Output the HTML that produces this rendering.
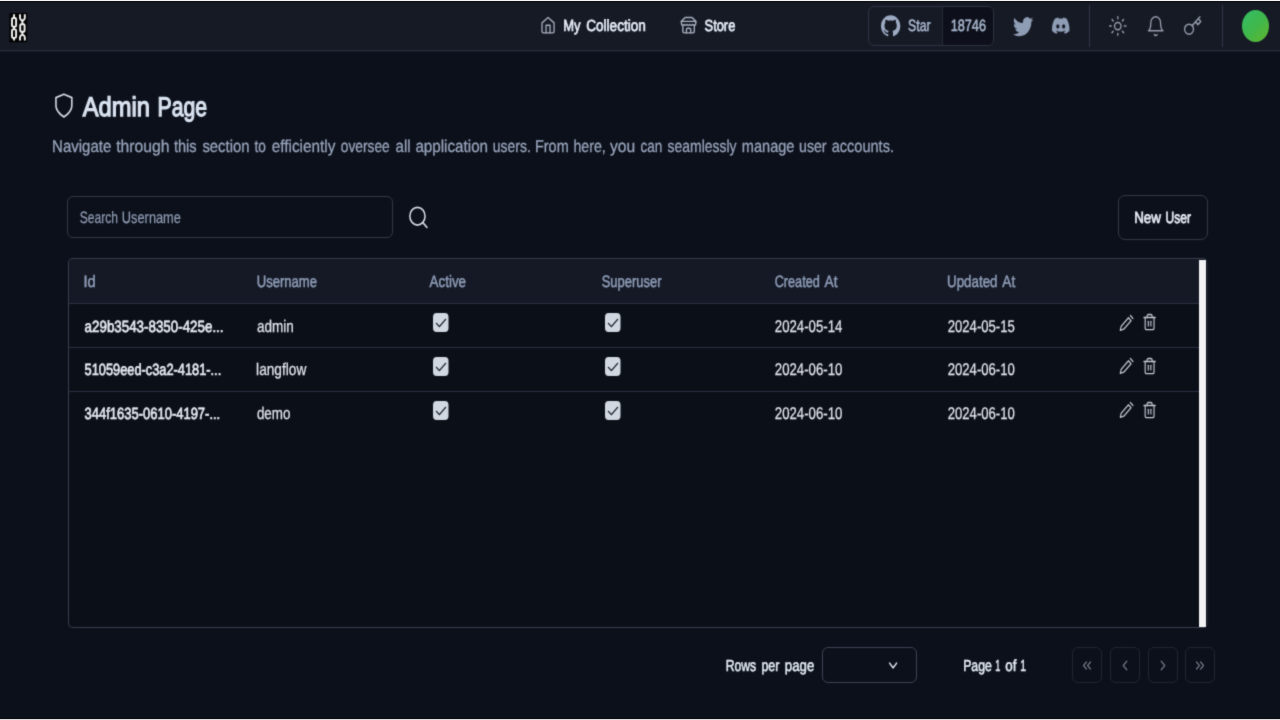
<!DOCTYPE html>
<html lang="en"><head><meta charset="utf-8"><title>Admin Page</title>
<style>
html,body{margin:0;padding:0;}
body{width:1280px;height:720px;overflow:hidden;position:relative;background:#0c101a;font-family:"Liberation Sans",sans-serif;}
.t{position:absolute;white-space:nowrap;line-height:1;transform-origin:0 0;display:block;}
.a{position:absolute;display:block;}
svg.a{overflow:visible;}
#txt text{font-family:"Liberation Sans",sans-serif;text-rendering:geometricPrecision;white-space:pre;}
.ln{fill:none;stroke-linecap:round;stroke-linejoin:round;}
</style></head><body>
<svg width="0" height="0" style="position:absolute"><filter id="soft" x="0" y="0" width="100%" height="100%" color-interpolation-filters="sRGB"><feConvolveMatrix order="3" kernelMatrix="0.0225 0.1050 0.0225 0.1050 0.4900 0.1050 0.0225 0.1050 0.0225" edgeMode="duplicate" preserveAlpha="true"/></filter></svg>
<div id="w" class="a" style="left:0;top:0;width:1280px;height:720px;background:#0c101a;filter:url(#soft)">
<!-- header -->
<div class="a" style="left:0;top:0;width:1280px;height:50px;background:#161a25"></div>
<div class="a" style="left:0;top:50px;width:1280px;height:1px;background:#272b39"></div>
<div class="a" style="left:0;top:51px;width:1280px;height:1px;background:#181c29"></div>

<!-- logo -->
<svg class="a" style="left:9px;top:13px" width="19" height="30" viewBox="0 0 19 30">
<rect x="0.4" y="0.1" width="17.8" height="29.1" rx="0.8" fill="#000"/>
<g fill="none" stroke="#f6f6f6" stroke-width="1.9" stroke-linecap="butt" stroke-linejoin="round">
<path d="M5.05 1.3V5"/><rect x="3" y="5" width="4.1" height="8.8" rx="1.3"/>
<path d="M5.05 13.8V16.4"/>
<rect x="3" y="16.4" width="4.1" height="8.5" rx="1.3"/><path d="M5.05 24.9V27.4"/>
<path d="M11 1.3V5Q11 6.6 13.4 7.8Q15.8 6.6 15.8 5V1.3"/>
<path d="M13.4 7.8V11.2"/>
<rect x="11.2" y="11.2" width="4.4" height="7.6" rx="1.3"/>
<path d="M13.4 18.8V21.6"/>
<path d="M11 27.4V24.2Q11 22.6 13.4 21.6Q15.8 22.6 15.8 24.2V27.4"/>
</g></svg>

<!-- home icon -->
<svg class="a ln" style="left:539.7px;top:16.4px" width="16.1" height="18.4" viewBox="0 0 24 24" preserveAspectRatio="none" stroke="#a9b0bf" stroke-width="1.9">
<path d="m3 9 9-7 9 7v11a2 2 0 0 1-2 2H5a2 2 0 0 1-2-2z"/><polyline points="9 22 9 12 15 12 15 22"/></svg>
<!-- store icon -->
<svg class="a ln" style="left:680.2px;top:16.4px" width="17.2" height="18.4" viewBox="0 0 24 24" preserveAspectRatio="none" stroke="#a9b0bf" stroke-width="1.9">
<path d="m2 7 4.41-4.41A2 2 0 0 1 7.83 2h8.34a2 2 0 0 1 1.42.59L22 7"/><path d="M4 12v8a2 2 0 0 0 2 2h12a2 2 0 0 0 2-2v-8"/><path d="M15 22v-4a2 2 0 0 0-2-2h-2a2 2 0 0 0-2 2v4"/><path d="M2 7h20"/><path d="M22 7v3a2 2 0 0 1-2 2a2.7 2.7 0 0 1-1.59-.63.7.7 0 0 0-.82 0A2.7 2.7 0 0 1 16 12a2.7 2.7 0 0 1-1.59-.63.7.7 0 0 0-.82 0A2.7 2.7 0 0 1 12 12a2.7 2.7 0 0 1-1.59-.63.7.7 0 0 0-.82 0A2.7 2.7 0 0 1 8 12a2.7 2.7 0 0 1-1.59-.63.7.7 0 0 0-.82 0A2.7 2.7 0 0 1 4 12a2 2 0 0 1-2-2V7"/></svg>

<!-- github button -->
<div class="a" style="left:868.3px;top:5.5px;width:125.6px;height:40.5px;box-sizing:border-box;border:1px solid #2c3243;border-radius:6px;background:#161a25;overflow:hidden">
<div class="a" style="left:72.4px;top:0;width:54px;height:40.5px;background:#0d101a;border-left:1px solid #252a39"></div></div>
<svg class="a" style="left:880.6px;top:14.6px" width="19.3" height="21.6" viewBox="0 0 24 24" preserveAspectRatio="none" fill="#9caac2">
<path d="M12 .297c-6.63 0-12 5.373-12 12 0 5.303 3.438 9.8 8.205 11.385.6.113.82-.258.82-.577 0-.285-.01-1.04-.015-2.04-3.338.724-4.042-1.61-4.042-1.61C4.422 18.07 3.633 17.7 3.633 17.7c-1.087-.744.084-.729.084-.729 1.205.084 1.838 1.236 1.838 1.236 1.07 1.835 2.809 1.305 3.495.998.108-.776.417-1.305.76-1.605-2.665-.3-5.466-1.332-5.466-5.93 0-1.31.465-2.38 1.235-3.22-.135-.303-.54-1.523.105-3.176 0 0 1.005-.322 3.3 1.23.96-.267 1.98-.399 3-.405 1.02.006 2.04.138 3 .405 2.28-1.552 3.285-1.23 3.285-1.23.645 1.653.24 2.873.12 3.176.765.84 1.23 1.91 1.23 3.22 0 4.61-2.805 5.625-5.475 5.92.42.36.81 1.096.81 2.22 0 1.606-.015 2.896-.015 3.286 0 .315.21.69.825.57C20.565 22.092 24 17.592 24 12.297c0-6.627-5.373-12-12-12"/></svg>
<!-- twitter -->
<svg class="a" style="left:1012.7px;top:14.6px" width="20.4" height="23.5" viewBox="0 0 24 24" preserveAspectRatio="none" fill="#8e9cb4">
<path d="M23.953 4.57a10 10 0 01-2.825.775 4.958 4.958 0 002.163-2.723c-.951.555-2.005.959-3.127 1.184a4.92 4.92 0 00-8.384 4.482C7.69 8.095 4.067 6.13 1.64 3.162a4.822 4.822 0 00-.666 2.475c0 1.71.87 3.213 2.188 4.096a4.904 4.904 0 01-2.228-.616v.06a4.923 4.923 0 003.946 4.827 4.996 4.996 0 01-2.212.085 4.936 4.936 0 004.604 3.417 9.867 9.867 0 01-6.102 2.105c-.39 0-.779-.023-1.17-.067a13.995 13.995 0 007.557 2.209c9.053 0 13.998-7.496 13.998-13.985 0-.21 0-.42-.015-.63A9.935 9.935 0 0024 4.59z"/></svg>
<!-- discord -->
<svg class="a" style="left:1051.9px;top:15.1px" width="17.5" height="21.2" viewBox="0 0 24 24" preserveAspectRatio="none" fill="#8e9cb4">
<path d="M20.317 4.3698a19.7913 19.7913 0 00-4.8851-1.5152.0741.0741 0 00-.0785.0371c-.211.3753-.4447.8648-.6083 1.2495-1.8447-.2762-3.68-.2762-5.4868 0-.1636-.3933-.4058-.8742-.6177-1.2495a.077.077 0 00-.0785-.037 19.7363 19.7363 0 00-4.8852 1.515.0699.0699 0 00-.0321.0277C.5334 9.0458-.319 13.5799.0992 18.0578a.0824.0824 0 00.0312.0561c2.0528 1.5076 4.0413 2.4228 5.9929 3.0294a.0777.0777 0 00.0842-.0276c.4616-.6304.8731-1.2952 1.226-1.9942a.076.076 0 00-.0416-.1057c-.6528-.2476-1.2743-.5495-1.8722-.8923a.077.077 0 01-.0076-.1277c.1258-.0943.2517-.1923.3718-.2914a.0743.0743 0 01.0776-.0105c3.9278 1.7933 8.18 1.7933 12.0614 0a.0739.0739 0 01.0785.0095c.1202.099.246.1981.3728.2924a.077.077 0 01-.0066.1276 12.2986 12.2986 0 01-1.873.8914.0766.0766 0 00-.0407.1067c.3604.698.7719 1.3628 1.225 1.9932a.076.076 0 00.0842.0286c1.961-.6067 3.9495-1.5219 6.0023-3.0294a.077.077 0 00.0313-.0552c.5004-5.177-.8382-9.6739-3.5485-13.6604a.061.061 0 00-.0312-.0286zM8.02 15.3312c-1.1825 0-2.1569-1.0857-2.1569-2.419 0-1.3332.9555-2.4189 2.157-2.4189 1.2108 0 2.1757 1.0952 2.1568 2.419 0 1.3332-.9555 2.4189-2.1569 2.4189zm7.9748 0c-1.1825 0-2.1569-1.0857-2.1569-2.419 0-1.3332.9554-2.4189 2.1569-2.4189 1.2108 0 2.1757 1.0952 2.1568 2.419 0 1.3332-.946 2.4189-2.1568 2.4189Z"/></svg>
<!-- separators -->
<div class="a" style="left:1089px;top:5px;width:1px;height:42px;background:#30354a"></div>
<div class="a" style="left:1222px;top:5px;width:1px;height:42px;background:#30354a"></div>
<!-- sun -->
<svg class="a ln" style="left:1108.1px;top:14.6px" width="19.6" height="22.2" viewBox="0 0 24 24" preserveAspectRatio="none" stroke="#989eae" stroke-width="1.6">
<circle cx="12" cy="12" r="4"/><path d="M12 2v2"/><path d="M12 20v2"/><path d="m4.93 4.93 1.41 1.41"/><path d="m17.66 17.66 1.41 1.41"/><path d="M2 12h2"/><path d="M20 12h2"/><path d="m6.34 17.66-1.41 1.41"/><path d="m19.07 4.93-1.41 1.41"/></svg>
<!-- bell -->
<svg class="a ln" style="left:1146.4px;top:15.0px" width="19.4" height="22.4" viewBox="0 0 24 24" preserveAspectRatio="none" stroke="#989eae" stroke-width="1.6">
<path d="M6 8a6 6 0 0 1 12 0c0 7 3 9 3 9H3s3-2 3-9"/><path d="M10.3 21a1.94 1.94 0 0 0 3.4 0"/></svg>
<!-- key -->
<svg class="a ln" style="left:1183.4px;top:15.1px" width="19.4" height="22" viewBox="0 0 24 24" preserveAspectRatio="none" stroke="#989eae" stroke-width="1.6">
<circle cx="7.5" cy="15.5" r="5.5"/><path d="m21 2-9.6 9.6"/><path d="m15.5 7.5 3 3L22 7l-3-3"/></svg>
<!-- avatar -->
<div class="a" style="left:1242px;top:9.5px;width:27px;height:32.4px;border-radius:50%;background:linear-gradient(135deg,#34bd68 0%,#3fb74c 50%,#62b62d 100%)"></div>

<!-- title -->
<svg class="a ln" style="left:51.7px;top:91.8px" width="23.8" height="27.2" viewBox="0 0 24 24" preserveAspectRatio="none" stroke="#d5dbe6" stroke-width="1.6">
<path d="M12 22s8-4 8-10V5l-8-3-8 3v7c0 6 8 10 8 10"/></svg>

<!-- search input -->
<div class="a" style="left:66.9px;top:195.5px;width:326px;height:42.8px;box-sizing:border-box;border:1px solid #343846;border-radius:6px"></div>
<svg class="a ln" style="left:407.3px;top:203.8px" width="22.8" height="26.6" viewBox="0 0 24 24" preserveAspectRatio="none" stroke="#d8dde7" stroke-width="1.6">
<circle cx="11" cy="11" r="8"/><path d="m21 21-4.3-4.3"/></svg>
<!-- new user -->
<div class="a" style="left:1118px;top:195px;width:90.4px;height:45px;box-sizing:border-box;border:1px solid #343846;border-radius:7px"></div>

<!-- table -->
<div class="a" style="left:67.6px;top:257.9px;width:1140.3px;height:370.5px;box-sizing:border-box;border:1px solid #373c4c;border-right-color:#1f2431;border-radius:5px;background:#0b0f18;overflow:hidden">
 <div class="a" style="left:0;top:0;width:1131px;height:44.6px;background:#151925"></div>
 <div class="a" style="left:0;top:44.1px;width:1131px;height:1px;background:#2a3041"></div>
 <div class="a" style="left:0;top:88.2px;width:1131px;height:1px;background:#2a3041"></div>
 <div class="a" style="left:0;top:132.3px;width:1131px;height:1px;background:#2a3041"></div>
</div>
<div class="a" style="left:1198.8px;top:259.6px;width:7.2px;height:367.2px;background:#f3f3f5"></div>
<svg class="a" style="left:433.0px;top:313.1px" width="15.5" height="19" viewBox="0 0 15.5 19"><rect x="0" y="0" width="15.5" height="19" rx="3.6" ry="4" fill="#d1d8e2"/><path d="M3.4 10.3 6.4 13.6 12.6 6.3" fill="none" stroke="#141923" stroke-width="1.25" stroke-linecap="round" stroke-linejoin="round"/></svg>
<svg class="a" style="left:605.4px;top:313.1px" width="15.5" height="19" viewBox="0 0 15.5 19"><rect x="0" y="0" width="15.5" height="19" rx="3.6" ry="4" fill="#d1d8e2"/><path d="M3.4 10.3 6.4 13.6 12.6 6.3" fill="none" stroke="#141923" stroke-width="1.25" stroke-linecap="round" stroke-linejoin="round"/></svg>
<svg class="a" style="left:433.0px;top:356.8px" width="15.5" height="19" viewBox="0 0 15.5 19"><rect x="0" y="0" width="15.5" height="19" rx="3.6" ry="4" fill="#d1d8e2"/><path d="M3.4 10.3 6.4 13.6 12.6 6.3" fill="none" stroke="#141923" stroke-width="1.25" stroke-linecap="round" stroke-linejoin="round"/></svg>
<svg class="a" style="left:605.4px;top:356.8px" width="15.5" height="19" viewBox="0 0 15.5 19"><rect x="0" y="0" width="15.5" height="19" rx="3.6" ry="4" fill="#d1d8e2"/><path d="M3.4 10.3 6.4 13.6 12.6 6.3" fill="none" stroke="#141923" stroke-width="1.25" stroke-linecap="round" stroke-linejoin="round"/></svg>
<svg class="a" style="left:433.0px;top:400.5px" width="15.5" height="19" viewBox="0 0 15.5 19"><rect x="0" y="0" width="15.5" height="19" rx="3.6" ry="4" fill="#d1d8e2"/><path d="M3.4 10.3 6.4 13.6 12.6 6.3" fill="none" stroke="#141923" stroke-width="1.25" stroke-linecap="round" stroke-linejoin="round"/></svg>
<svg class="a" style="left:605.4px;top:400.5px" width="15.5" height="19" viewBox="0 0 15.5 19"><rect x="0" y="0" width="15.5" height="19" rx="3.6" ry="4" fill="#d1d8e2"/><path d="M3.4 10.3 6.4 13.6 12.6 6.3" fill="none" stroke="#141923" stroke-width="1.25" stroke-linecap="round" stroke-linejoin="round"/></svg>
<svg class="a ln" style="left:1119.1px;top:313.7px" width="15.2" height="17.8" viewBox="0 0 24 24" preserveAspectRatio="none" stroke="#c4c9d4" stroke-width="1.8"><path d="M18 2l4 4"/><path d="M7.5 20.5 19 9l-4-4L3.500 16.500 2 22z"/></svg>
<svg class="a ln" style="left:1141.9px;top:313.2px" width="15.2" height="18.2" viewBox="0 0 24 24" preserveAspectRatio="none" stroke="#c4c9d4" stroke-width="1.8"><path d="M3 6h18"/><path d="M19 6v14c0 1-1 2-2 2H7c-1 0-2-1-2-2V6"/><path d="M8 6V4c0-1 1-2 2-2h4c1 0 2 1 2 2v2"/><path d="M10 11v6"/><path d="M14 11v6"/></svg>
<svg class="a ln" style="left:1119.1px;top:357.4px" width="15.2" height="17.8" viewBox="0 0 24 24" preserveAspectRatio="none" stroke="#c4c9d4" stroke-width="1.8"><path d="M18 2l4 4"/><path d="M7.5 20.5 19 9l-4-4L3.500 16.500 2 22z"/></svg>
<svg class="a ln" style="left:1141.9px;top:356.9px" width="15.2" height="18.2" viewBox="0 0 24 24" preserveAspectRatio="none" stroke="#c4c9d4" stroke-width="1.8"><path d="M3 6h18"/><path d="M19 6v14c0 1-1 2-2 2H7c-1 0-2-1-2-2V6"/><path d="M8 6V4c0-1 1-2 2-2h4c1 0 2 1 2 2v2"/><path d="M10 11v6"/><path d="M14 11v6"/></svg>
<svg class="a ln" style="left:1119.1px;top:401.0px" width="15.2" height="17.8" viewBox="0 0 24 24" preserveAspectRatio="none" stroke="#c4c9d4" stroke-width="1.8"><path d="M18 2l4 4"/><path d="M7.5 20.5 19 9l-4-4L3.500 16.500 2 22z"/></svg>
<svg class="a ln" style="left:1141.9px;top:400.5px" width="15.2" height="18.2" viewBox="0 0 24 24" preserveAspectRatio="none" stroke="#c4c9d4" stroke-width="1.8"><path d="M3 6h18"/><path d="M19 6v14c0 1-1 2-2 2H7c-1 0-2-1-2-2V6"/><path d="M8 6V4c0-1 1-2 2-2h4c1 0 2 1 2 2v2"/><path d="M10 11v6"/><path d="M14 11v6"/></svg>

<!-- pagination -->
<div class="a" style="left:822px;top:647px;width:95px;height:36px;box-sizing:border-box;border:1px solid #3b4254;border-radius:6px"></div>
<svg class="a ln" style="left:886px;top:655.5px" width="14.2" height="19" viewBox="0 0 24 24" preserveAspectRatio="none" stroke="#e2e7ef" stroke-width="2">
<path d="m6 9 6 6 6-6"/></svg>
<div class="a" style="left:1072.4px;top:647px;width:30px;height:36px;box-sizing:border-box;border:1px solid #20252f;border-radius:6px"></div>
<svg class="a ln" style="left:1080.4px;top:656.5px" width="14" height="17" viewBox="0 0 24 24" preserveAspectRatio="none" stroke="#757d8d" stroke-width="1.9"><path d="m11 17-5-5 5-5"/><path d="m18 17-5-5 5-5"/></svg>
<div class="a" style="left:1110.0px;top:647px;width:30px;height:36px;box-sizing:border-box;border:1px solid #20252f;border-radius:6px"></div>
<svg class="a ln" style="left:1118.0px;top:656.5px" width="14" height="17" viewBox="0 0 24 24" preserveAspectRatio="none" stroke="#757d8d" stroke-width="1.9"><path d="m15 18-6-6 6-6"/></svg>
<div class="a" style="left:1147.6px;top:647px;width:30px;height:36px;box-sizing:border-box;border:1px solid #20252f;border-radius:6px"></div>
<svg class="a ln" style="left:1155.6px;top:656.5px" width="14" height="17" viewBox="0 0 24 24" preserveAspectRatio="none" stroke="#757d8d" stroke-width="1.9"><path d="m9 18 6-6-6-6"/></svg>
<div class="a" style="left:1185.3px;top:647px;width:30px;height:36px;box-sizing:border-box;border:1px solid #20252f;border-radius:6px"></div>
<svg class="a ln" style="left:1193.3px;top:656.5px" width="14" height="17" viewBox="0 0 24 24" preserveAspectRatio="none" stroke="#757d8d" stroke-width="1.9"><path d="m6 17 5-5-5-5"/><path d="m13 17 5-5-5-5"/></svg>

<svg class="a" id="txt" style="left:0;top:0" width="1280" height="720" viewBox="0 0 1280 720">
<text transform="translate(563.23 0) scale(0.8052 1)" x="0" y="31" font-size="16.1" fill="#e6edf8" stroke="#e6edf8" stroke-width="0.7">My</text>
<text transform="translate(586.15 0) scale(0.8449 1)" x="0" y="31" font-size="16.1" fill="#e6edf8" stroke="#e6edf8" stroke-width="0.7">Collection</text>
<text transform="translate(704.58 0) scale(0.7982 1)" x="0" y="31" font-size="16.1" fill="#e6edf8" stroke="#e6edf8" stroke-width="0.7">Store</text>
<text transform="translate(908.12 0) scale(0.7435 1)" x="0" y="31" font-size="16.4" fill="#a6b4cb" stroke="#a6b4cb" stroke-width="0.6">Star</text>
<text transform="translate(950.66 0) scale(0.7745 1)" x="0" y="31" font-size="16.4" fill="#a6b4cb" stroke="#a6b4cb" stroke-width="0.6">18746</text>
<text transform="translate(82.80 0) scale(0.8767 1)" x="0" y="116" font-size="27.0" fill="#d9e2f0" stroke="#d9e2f0" stroke-width="1.25">Admin</text>
<text transform="translate(157.47 0) scale(0.7864 1)" x="0" y="116" font-size="27.0" fill="#d9e2f0" stroke="#d9e2f0" stroke-width="1.25">Page</text>
<text transform="translate(52.06 0) scale(0.8727 1)" x="0" y="152" font-size="17.2" fill="#97a4bc" stroke="#97a4bc" stroke-width="0.3">Navigate</text>
<text transform="translate(116.14 0) scale(0.9150 1)" x="0" y="152" font-size="17.2" fill="#97a4bc" stroke="#97a4bc" stroke-width="0.3">through</text>
<text transform="translate(173.88 0) scale(0.8506 1)" x="0" y="152" font-size="17.2" fill="#97a4bc" stroke="#97a4bc" stroke-width="0.3">this</text>
<text transform="translate(202.38 0) scale(0.8644 1)" x="0" y="152" font-size="17.2" fill="#97a4bc" stroke="#97a4bc" stroke-width="0.3">section</text>
<text transform="translate(254.52 0) scale(0.7957 1)" x="0" y="152" font-size="17.2" fill="#97a4bc" stroke="#97a4bc" stroke-width="0.3">to</text>
<text transform="translate(271.73 0) scale(0.8925 1)" x="0" y="152" font-size="17.2" fill="#97a4bc" stroke="#97a4bc" stroke-width="0.3">efficiently</text>
<text transform="translate(340.72 0) scale(0.8015 1)" x="0" y="152" font-size="17.2" fill="#97a4bc" stroke="#97a4bc" stroke-width="0.3">oversee</text>
<text transform="translate(395.53 0) scale(0.8754 1)" x="0" y="152" font-size="17.2" fill="#97a4bc" stroke="#97a4bc" stroke-width="0.3">all</text>
<text transform="translate(415.38 0) scale(0.8844 1)" x="0" y="152" font-size="17.2" fill="#97a4bc" stroke="#97a4bc" stroke-width="0.3">application</text>
<text transform="translate(492.81 0) scale(0.8107 1)" x="0" y="152" font-size="17.2" fill="#97a4bc" stroke="#97a4bc" stroke-width="0.3">users.</text>
<text transform="translate(534.99 0) scale(0.8393 1)" x="0" y="152" font-size="17.2" fill="#97a4bc" stroke="#97a4bc" stroke-width="0.3">From</text>
<text transform="translate(573.40 0) scale(0.8263 1)" x="0" y="152" font-size="17.2" fill="#97a4bc" stroke="#97a4bc" stroke-width="0.3">here,</text>
<text transform="translate(609.89 0) scale(0.9088 1)" x="0" y="152" font-size="17.2" fill="#97a4bc" stroke="#97a4bc" stroke-width="0.3">you</text>
<text transform="translate(640.42 0) scale(0.7868 1)" x="0" y="152" font-size="17.2" fill="#97a4bc" stroke="#97a4bc" stroke-width="0.3">can</text>
<text transform="translate(667.62 0) scale(0.8097 1)" x="0" y="152" font-size="17.2" fill="#97a4bc" stroke="#97a4bc" stroke-width="0.3">seamlessly</text>
<text transform="translate(741.78 0) scale(0.8479 1)" x="0" y="152" font-size="17.2" fill="#97a4bc" stroke="#97a4bc" stroke-width="0.3">manage</text>
<text transform="translate(799.00 0) scale(0.8240 1)" x="0" y="152" font-size="17.2" fill="#97a4bc" stroke="#97a4bc" stroke-width="0.3">user</text>
<text transform="translate(831.73 0) scale(0.8455 1)" x="0" y="152" font-size="17.2" fill="#97a4bc" stroke="#97a4bc" stroke-width="0.3">accounts.</text>
<text transform="translate(79.79 0) scale(0.7306 1)" x="0" y="223" font-size="16.5" fill="#8e9bb3" stroke="#8e9bb3" stroke-width="0.25">Search</text>
<text transform="translate(121.87 0) scale(0.7754 1)" x="0" y="223" font-size="16.5" fill="#8e9bb3" stroke="#8e9bb3" stroke-width="0.25">Username</text>
<text transform="translate(1134.16 0) scale(0.8320 1)" x="0" y="223" font-size="16.1" fill="#e8eef8" stroke="#e8eef8" stroke-width="0.7">New</text>
<text transform="translate(1165.46 0) scale(0.7488 1)" x="0" y="223" font-size="16.1" fill="#e8eef8" stroke="#e8eef8" stroke-width="0.7">User</text>
<text transform="translate(83.54 0) scale(0.8866 1)" x="0" y="287" font-size="16.5" fill="#8e9db8" stroke="#8e9db8" stroke-width="0.5">Id</text>
<text transform="translate(256.71 0) scale(0.7927 1)" x="0" y="287" font-size="16.5" fill="#8e9db8" stroke="#8e9db8" stroke-width="0.5">Username</text>
<text transform="translate(429.60 0) scale(0.8110 1)" x="0" y="287" font-size="16.5" fill="#8e9db8" stroke="#8e9db8" stroke-width="0.5">Active</text>
<text transform="translate(601.70 0) scale(0.7857 1)" x="0" y="287" font-size="16.5" fill="#8e9db8" stroke="#8e9db8" stroke-width="0.5">Superuser</text>
<text transform="translate(774.64 0) scale(0.7692 1)" x="0" y="287" font-size="16.5" fill="#8e9db8" stroke="#8e9db8" stroke-width="0.5">Created</text>
<text transform="translate(824.56 0) scale(0.8300 1)" x="0" y="287" font-size="16.5" fill="#8e9db8" stroke="#8e9db8" stroke-width="0.5">At</text>
<text transform="translate(947.04 0) scale(0.8087 1)" x="0" y="287" font-size="16.5" fill="#8e9db8" stroke="#8e9db8" stroke-width="0.5">Updated</text>
<text transform="translate(1002.36 0) scale(0.8300 1)" x="0" y="287" font-size="16.5" fill="#8e9db8" stroke="#8e9db8" stroke-width="0.5">At</text>
<text transform="translate(725.65 0) scale(0.7573 1)" x="0" y="671" font-size="16.1" fill="#e4ebf5" stroke="#e4ebf5" stroke-width="0.55">Rows</text>
<text transform="translate(761.39 0) scale(0.7718 1)" x="0" y="671" font-size="16.1" fill="#e4ebf5" stroke="#e4ebf5" stroke-width="0.55">per</text>
<text transform="translate(784.85 0) scale(0.8220 1)" x="0" y="671" font-size="16.1" fill="#e4ebf5" stroke="#e4ebf5" stroke-width="0.55">page</text>
<text transform="translate(963.15 0) scale(0.7624 1)" x="0" y="671" font-size="16.1" fill="#e4ebf5" stroke="#e4ebf5" stroke-width="0.55">Page</text>
<text transform="translate(995.29 0) scale(0.5673 1)" x="0" y="671" font-size="16.1" fill="#e4ebf5" stroke="#e4ebf5" stroke-width="0.55">1</text>
<text transform="translate(1005.18 0) scale(0.8344 1)" x="0" y="671" font-size="16.1" fill="#e4ebf5" stroke="#e4ebf5" stroke-width="0.55">of</text>
<text transform="translate(1020.23 0) scale(0.6550 1)" x="0" y="671" font-size="16.1" fill="#e4ebf5" stroke="#e4ebf5" stroke-width="0.55">1</text>
<text transform="translate(84.59 0) scale(0.8254 1)" x="0" y="332" font-size="16.2" fill="#e6eaf0" stroke="#e6eaf0" stroke-width="0.7">a29b3543-8350-425e...</text>
<text transform="translate(256.90 0) scale(0.8003 1)" x="0" y="332" font-size="16.9" fill="#e4e7ec" stroke="#e4e7ec" stroke-width="0.25">admin</text>
<text transform="translate(774.80 0) scale(0.7814 1)" x="0" y="332" font-size="16.9" fill="#e4e7ec" stroke="#e4e7ec" stroke-width="0.25">2024-05-14</text>
<text transform="translate(947.70 0) scale(0.7768 1)" x="0" y="332" font-size="16.9" fill="#e4e7ec" stroke="#e4e7ec" stroke-width="0.25">2024-05-15</text>
<text transform="translate(84.58 0) scale(0.7907 1)" x="0" y="375" font-size="16.2" fill="#e6eaf0" stroke="#e6eaf0" stroke-width="0.7">51059eed-c3a2-4181-...</text>
<text transform="translate(256.09 0) scale(0.8094 1)" x="0" y="375" font-size="16.9" fill="#e4e7ec" stroke="#e4e7ec" stroke-width="0.25">langflow</text>
<text transform="translate(774.80 0) scale(0.7814 1)" x="0" y="375" font-size="16.9" fill="#e4e7ec" stroke="#e4e7ec" stroke-width="0.25">2024-06-10</text>
<text transform="translate(947.70 0) scale(0.7768 1)" x="0" y="375" font-size="16.9" fill="#e4e7ec" stroke="#e4e7ec" stroke-width="0.25">2024-06-10</text>
<text transform="translate(84.58 0) scale(0.8016 1)" x="0" y="419" font-size="16.2" fill="#e6eaf0" stroke="#e6eaf0" stroke-width="0.7">344f1635-0610-4197-...</text>
<text transform="translate(256.90 0) scale(0.7932 1)" x="0" y="419" font-size="16.9" fill="#e4e7ec" stroke="#e4e7ec" stroke-width="0.25">demo</text>
<text transform="translate(774.80 0) scale(0.7814 1)" x="0" y="419" font-size="16.9" fill="#e4e7ec" stroke="#e4e7ec" stroke-width="0.25">2024-06-10</text>
<text transform="translate(947.70 0) scale(0.7768 1)" x="0" y="419" font-size="16.9" fill="#e4e7ec" stroke="#e4e7ec" stroke-width="0.25">2024-06-10</text>
</svg>

</div>
<div class="a" style="left:0;top:0;width:1280px;height:1px;background:#f4f4f4"></div>
<div class="a" style="left:0;top:1px;width:1280px;height:1px;background:#101217"></div>
<div class="a" style="left:0;top:2px;width:1280px;height:1px;background:#13161d"></div>
<div class="a" style="left:0;top:719px;width:1280px;height:1px;background:#dcdcdc"></div>
<div class="a" style="left:0;top:718px;width:1280px;height:1px;background:#0b0d11"></div>
</body></html>
